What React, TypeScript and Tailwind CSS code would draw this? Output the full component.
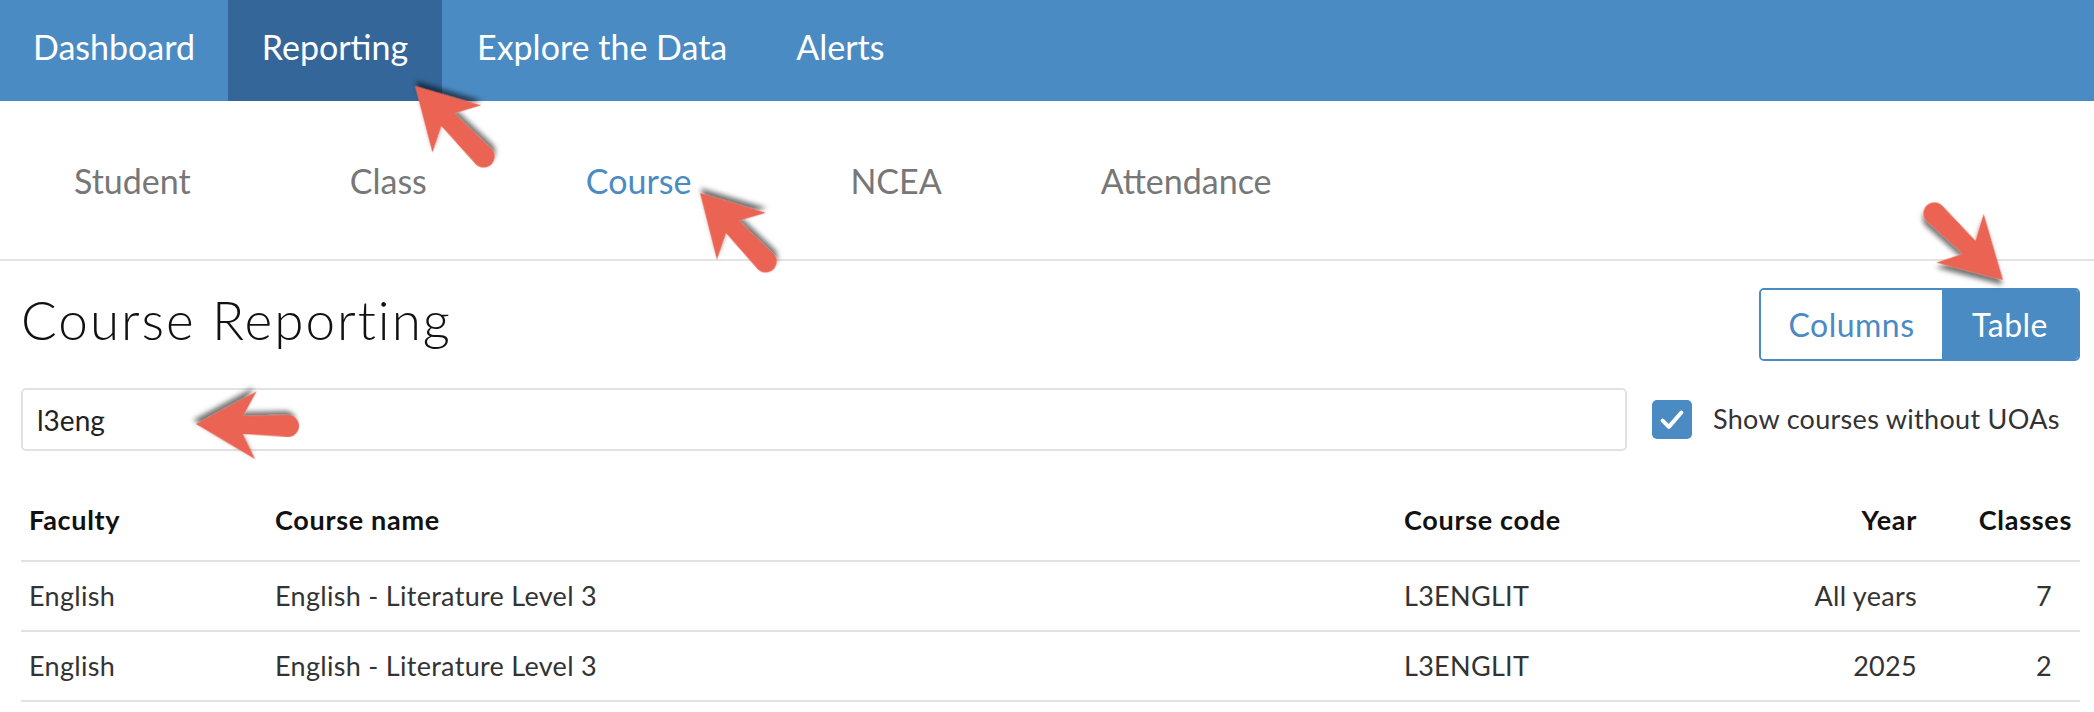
import React from "react"

const navItems = [
  { label: "Dashboard", cls: "w-[228px] justify-center" },
  { label: "Reporting", cls: "w-[214px] justify-center bg-[#356699]" },
  { label: "Explore the Data", cls: "px-[35px]" },
  { label: "Alerts", cls: "px-[34px]" },
]

const subItems = ["Student", "Class", "Course", "NCEA", "Attendance"]

const rows = [
  { faculty: "English", name: "English - Literature Level 3", code: "L3ENGLIT", year: "All years", classes: 7 },
  { faculty: "English", name: "English - Literature Level 3", code: "L3ENGLIT", year: "2025", classes: 2 },
]

// annotation arrows, page coordinates: origin = tail, tip = point
const arrows = [
  { ox: 485, oy: 158, tx: 415, ty: 86 },
  { ox: 767, oy: 263, tx: 700, ty: 193 },
  { ox: 1933, oy: 212, tx: 2003, ty: 280 },
  { ox: 290, oy: 426, tx: 196, ty: 424 },
]

function Arrow({ ox, oy, tx, ty }: { ox: number; oy: number; tx: number; ty: number }) {
  const dx = tx - ox
  const dy = ty - oy
  const L = Math.sqrt(dx * dx + dy * dy)
  const angle = (Math.atan2(dy, dx) * 180) / Math.PI
  const d = `M ${L} 0 L ${L - 60} -34 L ${L - 47} -9 L 2 -11 A 11 11 0 0 0 2 11 L ${L - 47} 9 L ${L - 60} 34 Z`
  return (
    <path
      d={d}
      fill="#eb6452"
      filter="url(#arrow-shadow)"
      transform={`translate(${ox} ${oy}) rotate(${angle})`}
    />
  )
}

export default function App() {
  return (
    <div className="relative h-[712px] overflow-hidden bg-white font-['Lato',sans-serif]">
      <nav className="flex h-[101px] bg-[#4b8bc3] text-[34px] text-white">
        {navItems.map((item) => (
          <a key={item.label} className={`flex items-center pb-[9px] ${item.cls}`}>
            {item.label}
          </a>
        ))}
      </nav>

      <div className="flex h-[160px] items-center gap-[159px] border-b-2 border-[#e3e3e3] pl-[74px] text-[34px] text-[#777]">
        {subItems.map((s) => (
          <a key={s} className={s === "Course" ? "text-[#4b8bc3]" : ""}>
            {s}
          </a>
        ))}
      </div>

      <main className="pl-[21px] pr-[14px]">
        <div className="mt-[27px] flex h-[73px] items-center justify-between">
          <h1 className="mb-[10px] text-[53px] font-light tracking-[2px] text-[#111]">Course Reporting</h1>
          <div className="flex h-[73px] overflow-hidden rounded-[5px] border-2 border-[#4b8bc3] text-[32px] tracking-[0.5px]">
            <button className="w-[181px] bg-white text-[#4b8bc3]">Columns</button>
            <button className="w-[136px] bg-[#4b8bc3] text-white">Table</button>
          </div>
        </div>

        <div className="mt-[27px] flex h-[63px] items-center">
          <input
            readOnly
            value="l3eng"
            className="h-[63px] w-[1606px] rounded-[5px] border-2 border-[#e2e2e2] pl-[14px] text-[28px] text-[#222] outline-none"
          />
          <div className="ml-[25px] flex h-[39px] w-[40px] items-center justify-center rounded-[5px] bg-[#4b8bc3]">
            <svg viewBox="0 0 24 24" className="h-[30px] w-[30px]" fill="none" stroke="white" strokeWidth="3.2" strokeLinecap="round" strokeLinejoin="round">
              <polyline points="4.5 12.5 9.5 17.5 19.5 6" />
            </svg>
          </div>
          <span className="ml-[21px] text-[27px] tracking-[0.3px] text-[#333]">Show courses without UOAs</span>
        </div>

        <div className="mt-[30px] text-[27px] tracking-[0.3px]">
          <div className="grid h-[81px] grid-cols-[246px_1129px_1fr_190px_155px] items-center border-b-2 border-[#e2e2e2] font-bold tracking-[0.7px] text-[#111]">
            <div className="pl-[8px] pr-[10px]">Faculty</div>
            <div className="pl-[8px] pr-[10px]">Course name</div>
            <div className="pl-[8px] pr-[10px]">Course code</div>
            <div className="px-[8px] text-right">Year</div>
            <div className="px-[8px] text-right">Classes</div>
          </div>
          {rows.map((r, i) => (
            <div
              key={i}
              className="grid h-[70px] grid-cols-[246px_1129px_1fr_190px_155px] items-center border-b-2 border-[#e2e2e2] text-[#333]"
            >
              <div className="pl-[8px] pr-[10px]">{r.faculty}</div>
              <div className="pl-[8px] pr-[10px]">{r.name}</div>
              <div className="pl-[8px] pr-[10px]">{r.code}</div>
              <div className="px-[8px] text-right">{r.year}</div>
              <div className="pl-[10px] pr-[28px] text-right">{r.classes}</div>
            </div>
          ))}
        </div>
      </main>

      <svg className="pointer-events-none absolute inset-0 h-[712px] w-[2094px]" viewBox="0 0 2094 712">
        <defs>
          <filter id="arrow-shadow" x="-30%" y="-30%" width="160%" height="160%">
            <feDropShadow dx="3" dy="4" stdDeviation="2.5" floodColor="#000" floodOpacity="0.55" />
          </filter>
        </defs>
        {arrows.map((a, i) => (
          <Arrow key={i} {...a} />
        ))}
      </svg>
    </div>
  )
}
